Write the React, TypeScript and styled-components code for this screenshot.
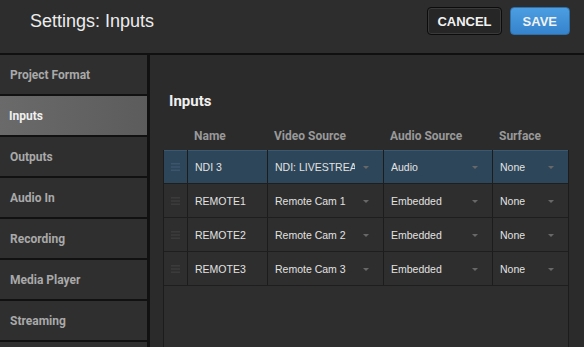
import styled, { createGlobalStyle } from "styled-components";

const GlobalStyle = createGlobalStyle`
  html, body {
    margin: 0;
    padding: 0;
    background: #2c2c2c;
    overflow: hidden;
  }
  * {
    box-sizing: border-box;
  }
`;

const menu = [
  "Project Format",
  "Inputs",
  "Outputs",
  "Audio In",
  "Recording",
  "Media Player",
  "Streaming",
  "",
];

interface InputRow {
  name: string;
  video: string;
  audio: string;
  surface: string;
}

const rows: InputRow[] = [
  { name: "NDI 3", video: "NDI: LIVESTREAM", audio: "Audio", surface: "None" },
  { name: "REMOTE1", video: "Remote Cam 1", audio: "Embedded", surface: "None" },
  { name: "REMOTE2", video: "Remote Cam 2", audio: "Embedded", surface: "None" },
  { name: "REMOTE3", video: "Remote Cam 3", audio: "Embedded", surface: "None" },
];

const COLS = "23px 80px 116px 109px 1fr";

function Caret() {
  return (
    <CaretIcon viewBox="0 0 6 3">
      <path d="M0 0 L6 0 L3 3 Z" fill="currentColor" />
    </CaretIcon>
  );
}

function Handle() {
  return (
    <HandleIcon viewBox="0 0 10 8">
      <rect x="0" y="0" width="10" height="1" fill="currentColor" />
      <rect x="0" y="3.5" width="10" height="1" fill="currentColor" />
      <rect x="0" y="7" width="10" height="1" fill="currentColor" />
    </HandleIcon>
  );
}

function App() {
  return (
    <Page>
      <GlobalStyle />
      <Header>
        <Title>Settings: Inputs</Title>
        <Actions>
          <Button>CANCEL</Button>
          <Button $primary>SAVE</Button>
        </Actions>
      </Header>
      <Body>
        <Sidebar>
          {menu.map((item, i) => (
            <MenuItem key={i} $active={item === "Inputs"}>
              {item}
            </MenuItem>
          ))}
        </Sidebar>
        <Main>
          <Heading>Inputs</Heading>
          <HeadRow>
            <span />
            <HeadCell>Name</HeadCell>
            <HeadCell>Video Source</HeadCell>
            <HeadCell>Audio Source</HeadCell>
            <HeadCell>Surface</HeadCell>
          </HeadRow>
          <Table>
            {rows.map((r, i) => (
              <Row key={r.name} $selected={i === 0}>
                <HandleCell $selected={i === 0}>
                  <Handle />
                </HandleCell>
                <Cell>{r.name}</Cell>
                <SelectCell>
                  <SelectText>{r.video}</SelectText>
                  <Caret />
                </SelectCell>
                <SelectCell>
                  <SelectText>{r.audio}</SelectText>
                  <Caret />
                </SelectCell>
                <SelectCell>
                  <SelectText>{r.surface}</SelectText>
                  <Caret />
                </SelectCell>
              </Row>
            ))}
          </Table>
        </Main>
      </Body>
    </Page>
  );
}

const Page = styled.div`
  width: 584px;
  height: 347px;
  display: flex;
  flex-direction: column;
  font-family: "Liberation Sans", Arial, sans-serif;
  background: #2c2c2c;
`;

const Header = styled.div`
  height: 55px;
  flex-shrink: 0;
  display: flex;
  justify-content: space-between;
  align-items: flex-start;
  padding: 7px 14px 0 30px;
  background: #2d2d2d;
  border-bottom: 2px solid #101010;
`;

const Title = styled.div`
  font-size: 18px;
  line-height: 28px;
  color: #ececec;
`;

const Actions = styled.div`
  display: flex;
  gap: 8px;
`;

const Button = styled.button<{ $primary?: boolean }>`
  height: 28px;
  padding: 0 ${(p) => (p.$primary ? "12px" : "9px")};
  font-family: "Liberation Sans", Arial, sans-serif;
  font-size: 13px;
  font-weight: bold;
  color: #f2f2f2;
  border-radius: 4px;
  border: 1px solid ${(p) => (p.$primary ? "#2f6fa8" : "#0c0c0c")};
  background: ${(p) =>
    p.$primary ? "linear-gradient(#4c9ee2, #3583cc)" : "#262626"};
  box-shadow: ${(p) => (p.$primary ? "none" : "inset 0 0 0 1px #3a3a3a")};
`;

const Body = styled.div`
  flex: 1;
  display: flex;
  min-height: 0;
`;

const Sidebar = styled.div`
  width: 150px;
  flex-shrink: 0;
  background: #111;
  border-right: 3px solid #111;
  display: flex;
  flex-direction: column;
  overflow: hidden;
`;

const MenuItem = styled.div<{ $active?: boolean }>`
  height: 39px;
  flex-shrink: 0;
  margin-bottom: 2px;
  display: flex;
  align-items: center;
  padding-left: ${(p) => (p.$active ? "9px" : "10px")};
  font-family: Roboto, "Liberation Sans", Arial, sans-serif;
  font-size: 12px;
  font-weight: bold;
  color: ${(p) => (p.$active ? "#f0f0f0" : "#a9a9a9")};
  background: ${(p) =>
    p.$active ? "linear-gradient(90deg, #6a6a6a, #5c5c5c)" : "#2f2f2f"};
`;

const Main = styled.div`
  flex: 1;
  display: flex;
  flex-direction: column;
  padding: 37px 15px 0 13px;
  background: #2b2b2b;
`;

const Heading = styled.div`
  font-family: Roboto, "Liberation Sans", Arial, sans-serif;
  font-size: 15px;
  font-weight: bold;
  line-height: 18px;
  color: #f0f0f0;
  padding-left: 6px;
  margin-bottom: 9px;
`;

const HeadRow = styled.div`
  display: grid;
  grid-template-columns: ${COLS};
  height: 31px;
  padding-top: 2px;
  align-items: center;
`;

const HeadCell = styled.div`
  font-family: Roboto, "Liberation Sans", Arial, sans-serif;
  font-size: 12px;
  font-weight: bold;
  color: #999999;
  padding-left: 8px;
`;

const Table = styled.div`
  flex: 1;
  display: flex;
  flex-direction: column;
  background: #2e2e2e;
  border-left: 1px solid #1c1c1c;
  border-right: 1px solid #1c1c1c;
`;

const Row = styled.div<{ $selected?: boolean }>`
  display: grid;
  grid-template-columns: ${COLS};
  height: 34px;
  border-bottom: 1px solid #1e1e1e;
  background: ${(p) => (p.$selected ? "#2e4659" : "#2e2e2e")};
  box-shadow: ${(p) => (p.$selected ? "inset 0 1px 0 #3c5870" : "none")};
`;

const Cell = styled.div`
  display: flex;
  align-items: center;
  padding-left: 7px;
  padding-top: 1px;
  font-size: 10.5px;
  color: #e2e2e2;
  border-left: 1px solid #1c1c1c;
  overflow: hidden;
  white-space: nowrap;
`;

const HandleCell = styled.div<{ $selected?: boolean }>`
  display: flex;
  align-items: center;
  justify-content: center;
  color: ${(p) => (p.$selected ? "#45607a" : "#454545")};
`;

const SelectCell = styled(Cell)`
  padding-right: 14px;
  justify-content: space-between;
  gap: 6px;
`;

const SelectText = styled.span`
  overflow: hidden;
  white-space: nowrap;
  max-width: 80px;
`;

const CaretIcon = styled.svg`
  width: 6px;
  height: 3px;
  flex-shrink: 0;
  color: #686868;
`;

const HandleIcon = styled.svg`
  width: 9px;
  height: 8px;
`;

export default App;
